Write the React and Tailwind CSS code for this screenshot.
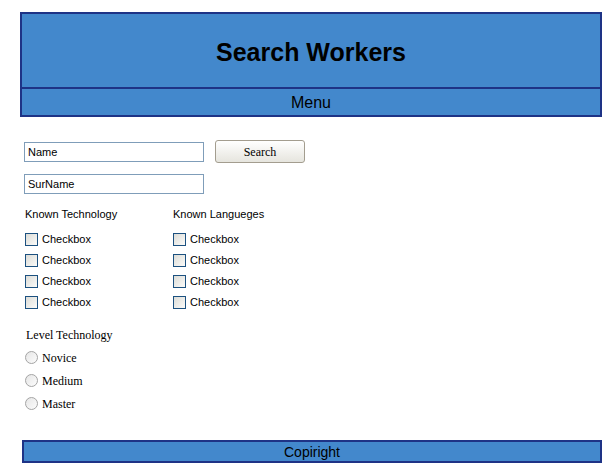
const Checkbox = ({ label }) => (
  <label className="flex items-center gap-[4px] h-[13px]">
    <span className="block w-[13px] h-[13px] border border-[#1c5180] bg-gradient-to-br from-[#dcdcd7] to-[#fbfbf9]" />
    <span className="text-[11px] leading-none text-black">{label}</span>
  </label>
);

const Radio = ({ label }) => (
  <label className="flex items-center gap-[4px] h-[13px]">
    <span className="block w-[13px] h-[13px] rounded-full border border-[#a4a4a4] bg-gradient-to-br from-[#e6e6e6] to-[#fcfcfc]" />
    <span className="font-['Liberation_Serif',serif] text-[12px] leading-none text-black">
      {label}
    </span>
  </label>
);

const CheckGroup = ({ title }) => (
  <div className="flex flex-col w-[148px]">
    <div className="text-[11px] leading-none h-[13px]">{title}</div>
    <div className="flex flex-col gap-[8px] mt-[11px]">
      <Checkbox label="Checkbox" />
      <Checkbox label="Checkbox" />
      <Checkbox label="Checkbox" />
      <Checkbox label="Checkbox" />
    </div>
  </div>
);

export default function App() {
  return (
    <div className="w-[608px] h-[467px] bg-white font-['Liberation_Sans',Arial,sans-serif] text-black">
      <header className="ml-[20px] mt-[12px] w-[582px] border-2 border-[#1e3386] bg-[#4388cc]">
        <div className="h-[75px] pt-[3px] flex items-center justify-center border-b-2 border-[#1e3386]">
          <h1 className="text-[25px] font-bold leading-none">Search Workers</h1>
        </div>
        <div className="h-[26px] pt-[1px] flex items-center justify-center text-[16px]">Menu</div>
      </header>

      <form className="pl-[24px] pt-[23px]">
        <div className="flex items-center gap-[11px] h-[23px]">
          <input
            type="text"
            defaultValue="Name"
            className="w-[180px] h-[20px] border border-[#7f9db9] px-[3px] text-[11px] outline-none"
          />
          <button
            type="button"
            className="w-[90px] h-[23px] rounded-[3px] border border-[#a39d8f] bg-gradient-to-b from-[#ffffff] to-[#e6e5de] font-['Liberation_Serif',serif] text-[12px]"
          >
            Search
          </button>
        </div>
        <div className="mt-[8px]">
          <input
            type="text"
            defaultValue="SurName"
            className="w-[180px] h-[20px] border border-[#7f9db9] px-[3px] text-[11px] outline-none"
          />
        </div>

        <div className="flex mt-[14px] pl-[1px]">
          <CheckGroup title="Known Technology" />
          <CheckGroup title="Known Langueges" />
        </div>

        <div className="mt-[20px] pl-[2px] font-['Liberation_Serif',serif] text-[12px] leading-none h-[13px]">
          Level Technology
        </div>
        <div className="flex flex-col gap-[10px] mt-[9px] pl-[1px]">
          <Radio label="Novice" />
          <Radio label="Medium" />
          <Radio label="Master" />
        </div>
      </form>

      <footer className="ml-[22px] mt-[30px] w-[580px] h-[23px] pt-[1px] border-2 border-[#1e3386] bg-[#4388cc] flex items-center justify-center text-[14px]">
        Copiright
      </footer>
    </div>
  );
}
